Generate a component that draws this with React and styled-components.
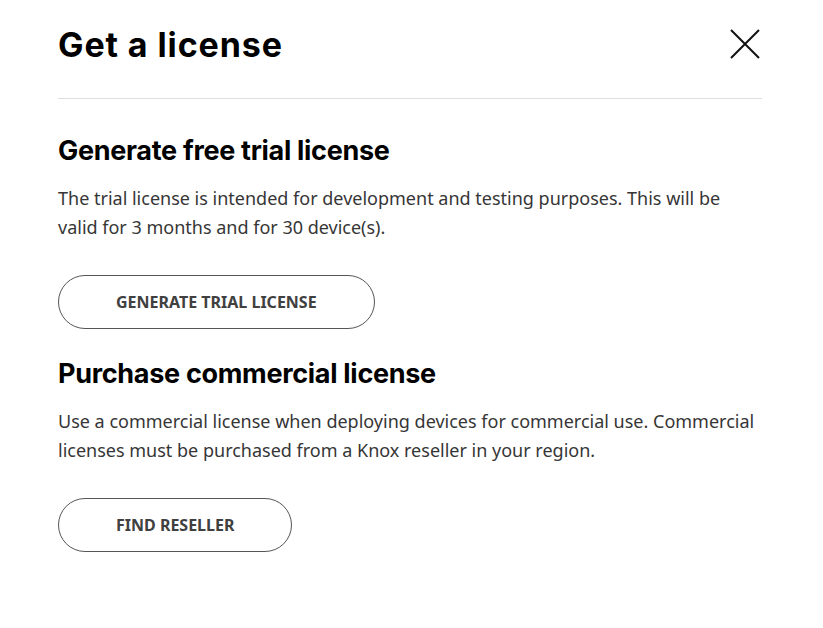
import styled, { createGlobalStyle } from "styled-components";

const GlobalStyle = createGlobalStyle`
  body {
    margin: 0;
    background: #fff;
    font-family: "Noto Sans", "Open Sans", sans-serif;
  }
`;

const Modal = styled.div`
  width: 704px;
  padding: 23px 0 0 58px;
`;

const Header = styled.div`
  display: flex;
  align-items: center;
  justify-content: space-between;
  height: 42px;
  padding-bottom: 33px;
  border-bottom: 1px solid #dddddd;
`;

const Title = styled.h1`
  margin: 0;
  font-family: "Inter", sans-serif;
  font-weight: 700;
  font-size: 34px;
  letter-spacing: 0.9px;
  color: #000;
`;

const CloseButton = styled.button`
  border: 0;
  background: none;
  padding: 0;
  width: 32px;
  height: 32px;
  margin-right: 1px;
  cursor: pointer;
`;

const Section = styled.section`
  padding-top: ${(p) => p.$top}px;
`;

const Heading = styled.h2`
  margin: 0;
  font-family: "Inter", sans-serif;
  font-weight: 700;
  font-size: 27px;
  letter-spacing: -0.3px;
  color: #000;
`;

const Text = styled.p`
  max-width: 700px;
  margin: 17px 0 0;
  font-size: 18px;
  line-height: 29px;
  color: #363636;
`;

const PillButton = styled.button`
  margin-top: 33px;
  height: 54px;
  padding: 0 57px;
  border: 1px solid #555;
  border-radius: 27px;
  background: #fff;
  font-family: "Noto Sans", sans-serif;
  font-weight: 700;
  font-size: 16px;
  color: #404040;
  cursor: pointer;
`;

export default function App() {
  return (
    <>
      <GlobalStyle />
      <Modal>
        <Header>
          <Title>Get a license</Title>
          <CloseButton aria-label="Close">
            <svg width="32" height="32" viewBox="0 0 32 32">
              <path d="M2 2 L30 30 M30 2 L2 30" stroke="#111" strokeWidth="2" fill="none" />
            </svg>
          </CloseButton>
        </Header>
        <Section $top={35}>
          <Heading>Generate free trial license</Heading>
          <Text>
            The trial license is intended for development and testing purposes. This will be
            valid for 3 months and for 30 device(s).
          </Text>
          <PillButton>GENERATE TRIAL LICENSE</PillButton>
        </Section>
        <Section $top={28}>
          <Heading>Purchase commercial license</Heading>
          <Text>
            Use a commercial license when deploying devices for commercial use. Commercial
            licenses must be purchased from a Knox reseller in your region.
          </Text>
          <PillButton>FIND RESELLER</PillButton>
        </Section>
      </Modal>
    </>
  );
}
